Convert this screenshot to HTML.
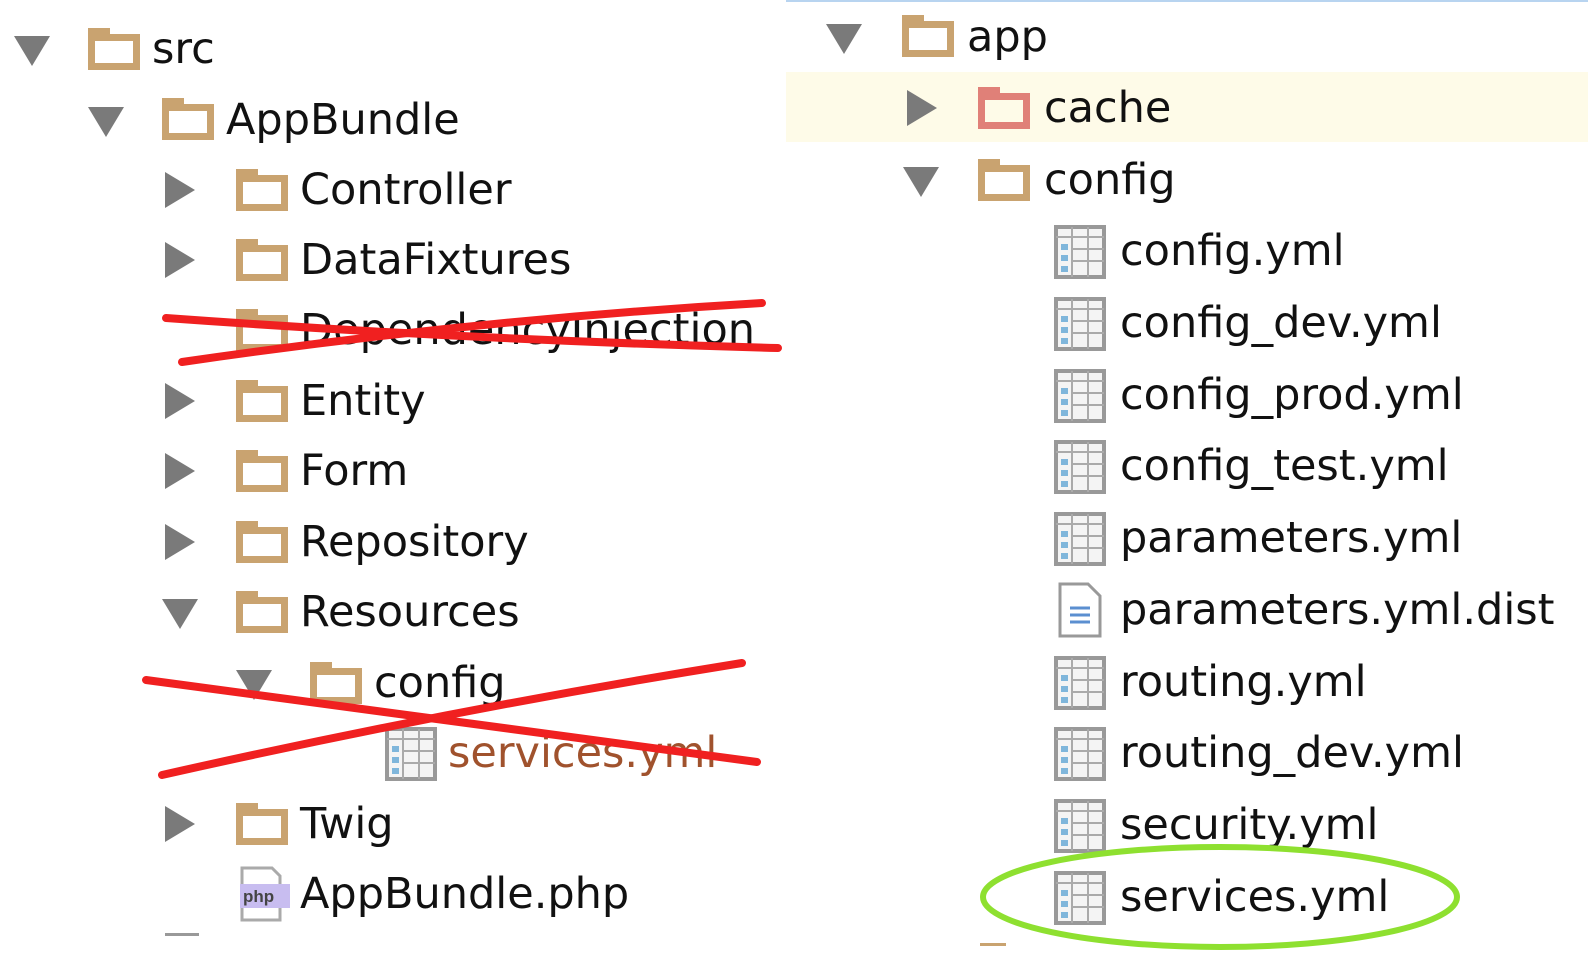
<!DOCTYPE html>
<html><head><meta charset="utf-8"><style>
body{margin:0;width:1588px;height:970px;background:#fff;position:relative;overflow:hidden;font-family:"DejaVu Sans","Liberation Sans",sans-serif;}
.r{position:absolute;height:70px;line-height:70px;font-size:43px;color:#111;white-space:nowrap;}
.i{position:absolute;}
</style></head><body>
<div style="position:absolute;left:786px;top:0;width:802px;height:2px;background:#b8d4f0"></div>
<div style="position:absolute;left:786px;top:72px;width:802px;height:70px;background:#fefbe8"></div>
<svg width="0" height="0" style="position:absolute">
<defs>
<symbol id="fd" viewBox="0 0 52 44"><path d="M0 2h22v6h30v36H0z M7 15v22h38V15z" fill="#c9a370" fill-rule="evenodd"/></symbol>
<symbol id="fr" viewBox="0 0 52 44"><path d="M0 2h22v6h30v36H0z M7 15v22h38V15z" fill="#e08078" fill-rule="evenodd"/></symbol>
<symbol id="dn" viewBox="0 0 36 30"><path d="M0 0h36L18 30z" fill="#7a7a7a"/></symbol>
<symbol id="rt" viewBox="0 0 30 36"><path d="M0 0L30 18L0 36z" fill="#7a7a7a"/></symbol>
<symbol id="ym" viewBox="0 0 52 54"><rect x="2" y="2" width="48" height="50" fill="#f4f4f4" stroke="#999" stroke-width="4"/><path d="M2 12h48M18 2v50M34 2v50M18 24h32M18 36h32" stroke="#aaa" stroke-width="2" fill="none"/><rect x="7" y="19" width="7" height="6" fill="#7fb6db"/><rect x="7" y="30" width="7" height="6" fill="#7fb6db"/><rect x="7" y="41" width="7" height="6" fill="#7fb6db"/></symbol>
</defs></svg>

<svg class="i" style="left:14px;top:36px" width="36" height="30"><use href="#dn"/></svg>
<svg class="i" style="left:88px;top:26px" width="52" height="44"><use href="#fd"/></svg>
<div class="r" style="left:152px;top:14px">src</div>

<svg class="i" style="left:88px;top:107px" width="36" height="30"><use href="#dn"/></svg>
<svg class="i" style="left:162px;top:96px" width="52" height="44"><use href="#fd"/></svg>
<div class="r" style="left:226px;top:85px">AppBundle</div>

<svg class="i" style="left:165px;top:172px" width="30" height="36"><use href="#rt"/></svg>
<svg class="i" style="left:236px;top:167px" width="52" height="44"><use href="#fd"/></svg>
<div class="r" style="left:300px;top:155px">Controller</div>

<svg class="i" style="left:165px;top:242px" width="30" height="36"><use href="#rt"/></svg>
<svg class="i" style="left:236px;top:237px" width="52" height="44"><use href="#fd"/></svg>
<div class="r" style="left:300px;top:225px">DataFixtures</div>

<svg class="i" style="left:236px;top:307px" width="52" height="44"><use href="#fd"/></svg>
<div class="r" style="left:300px;top:295px">DependencyInjection</div>

<svg class="i" style="left:165px;top:383px" width="30" height="36"><use href="#rt"/></svg>
<svg class="i" style="left:236px;top:378px" width="52" height="44"><use href="#fd"/></svg>
<div class="r" style="left:300px;top:366px">Entity</div>

<svg class="i" style="left:165px;top:453px" width="30" height="36"><use href="#rt"/></svg>
<svg class="i" style="left:236px;top:448px" width="52" height="44"><use href="#fd"/></svg>
<div class="r" style="left:300px;top:436px">Form</div>

<svg class="i" style="left:165px;top:524px" width="30" height="36"><use href="#rt"/></svg>
<svg class="i" style="left:236px;top:519px" width="52" height="44"><use href="#fd"/></svg>
<div class="r" style="left:300px;top:507px">Repository</div>

<svg class="i" style="left:162px;top:599px" width="36" height="30"><use href="#dn"/></svg>
<svg class="i" style="left:236px;top:589px" width="52" height="44"><use href="#fd"/></svg>
<div class="r" style="left:300px;top:577px">Resources</div>

<svg class="i" style="left:236px;top:670px" width="36" height="30"><use href="#dn"/></svg>
<svg class="i" style="left:310px;top:660px" width="52" height="44"><use href="#fd"/></svg>
<div class="r" style="left:374px;top:648px">config</div>

<svg class="i" style="left:385px;top:727px" width="52" height="54"><use href="#ym"/></svg>
<div class="r" style="left:448px;top:718px;color:#a0522d">services.yml</div>

<svg class="i" style="left:165px;top:806px" width="30" height="36"><use href="#rt"/></svg>
<svg class="i" style="left:236px;top:801px" width="52" height="44"><use href="#fd"/></svg>
<div class="r" style="left:300px;top:789px">Twig</div>

<svg class="i" style="left:240px;top:866px" width="50" height="56" viewBox="0 0 50 56"><path d="M2 2h30l8 8v44H2z" fill="#fff" stroke="#aaa" stroke-width="3"/><rect x="0" y="18" width="50" height="24" fill="#c8bdf0"/><text x="3" y="36" font-size="17" font-family="Liberation Sans" font-weight="bold" fill="#444">php</text></svg>
<div class="r" style="left:300px;top:859px">AppBundle.php</div>
<div style="position:absolute;left:165px;top:933px;width:34px;height:3px;background:#999"></div>

<svg class="i" style="left:826px;top:24px" width="36" height="30"><use href="#dn"/></svg>
<svg class="i" style="left:902px;top:13px" width="52" height="44"><use href="#fd"/></svg>
<div class="r" style="left:967px;top:2px">app</div>

<svg class="i" style="left:907px;top:90px" width="30" height="36"><use href="#rt"/></svg>
<svg class="i" style="left:978px;top:85px" width="52" height="44"><use href="#fr"/></svg>
<div class="r" style="left:1044px;top:73px">cache</div>

<svg class="i" style="left:903px;top:167px" width="36" height="30"><use href="#dn"/></svg>
<svg class="i" style="left:978px;top:157px" width="52" height="44"><use href="#fd"/></svg>
<div class="r" style="left:1044px;top:145px">config</div>

<svg class="i" style="left:1054px;top:225px" width="52" height="54"><use href="#ym"/></svg>
<div class="r" style="left:1120px;top:216px">config.yml</div>
<svg class="i" style="left:1054px;top:297px" width="52" height="54"><use href="#ym"/></svg>
<div class="r" style="left:1120px;top:288px">config_dev.yml</div>
<svg class="i" style="left:1054px;top:369px" width="52" height="54"><use href="#ym"/></svg>
<div class="r" style="left:1120px;top:360px">config_prod.yml</div>
<svg class="i" style="left:1054px;top:440px" width="52" height="54"><use href="#ym"/></svg>
<div class="r" style="left:1120px;top:431px">config_test.yml</div>
<svg class="i" style="left:1054px;top:512px" width="52" height="54"><use href="#ym"/></svg>
<div class="r" style="left:1120px;top:503px">parameters.yml</div>
<svg class="i" style="left:1058px;top:582px" width="44" height="56" viewBox="0 0 44 56"><path d="M2 2h28l12 12v40H2z" fill="#fff" stroke="#999" stroke-width="3"/><path d="M12 26h20M12 33h20M12 40h20" stroke="#5b8fd0" stroke-width="3"/></svg>
<div class="r" style="left:1120px;top:575px">parameters.yml.dist</div>
<svg class="i" style="left:1054px;top:656px" width="52" height="54"><use href="#ym"/></svg>
<div class="r" style="left:1120px;top:647px">routing.yml</div>
<svg class="i" style="left:1054px;top:727px" width="52" height="54"><use href="#ym"/></svg>
<div class="r" style="left:1120px;top:718px">routing_dev.yml</div>
<svg class="i" style="left:1054px;top:799px" width="52" height="54"><use href="#ym"/></svg>
<div class="r" style="left:1120px;top:790px">security.yml</div>
<svg class="i" style="left:1054px;top:871px" width="52" height="54"><use href="#ym"/></svg>
<div class="r" style="left:1120px;top:862px">services.yml</div>
<div style="position:absolute;left:980px;top:943px;width:26px;height:3px;background:#c9a370"></div>

<svg style="position:absolute;left:0;top:0" width="1588" height="970">
<g stroke="#f02020" stroke-width="8" stroke-linecap="round" fill="none">
<path d="M166 318 Q470 340 778 348"/>
<path d="M182 362 Q470 320 762 303"/>
<path d="M146 680 Q450 720 757 762"/>
<path d="M162 775 Q450 710 742 663"/>
</g>
<ellipse cx="1220" cy="897" rx="237" ry="50" fill="none" stroke="#8ee030" stroke-width="6"/>
</svg>
</body></html>
